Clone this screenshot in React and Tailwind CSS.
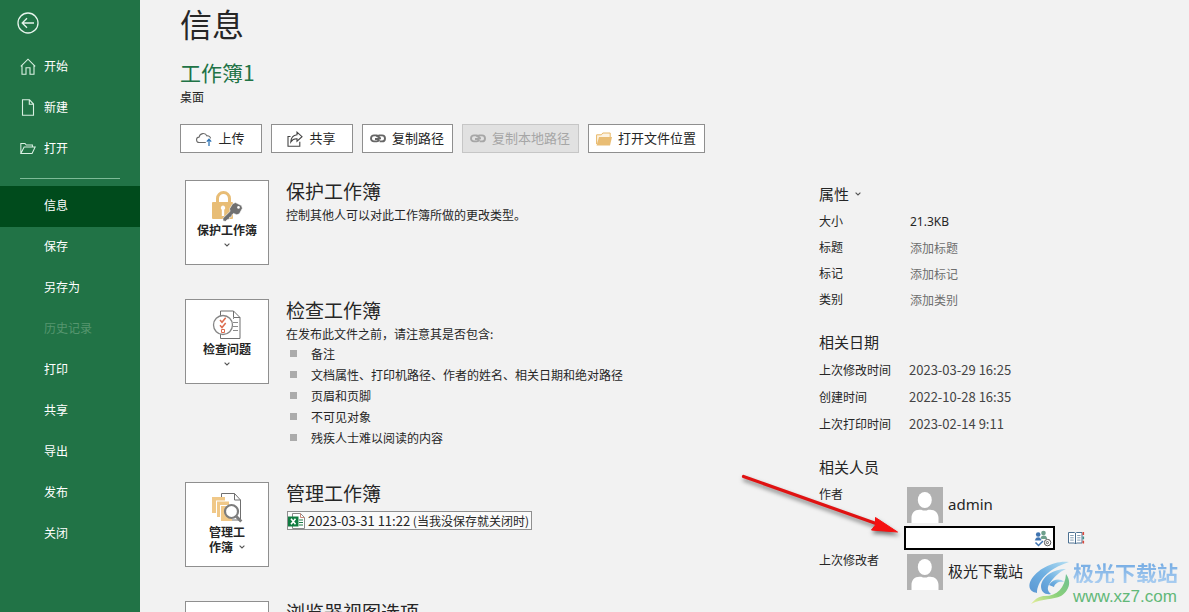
import { useState } from "react";

const buttonLabels = {
  upload: "上传",
  share: "共享",
  copyPath: "复制路径",
  copyLocalPath: "复制本地路径",
  openLocation: "打开文件位置",
};

const menuItems = [
  { label: "信息", active: true },
  { label: "保存" },
  { label: "另存为" },
  { label: "历史记录", disabled: true },
  { label: "打印" },
  { label: "共享" },
  { label: "导出" },
  { label: "发布" },
  { label: "关闭" },
];

const issues = [
  "备注",
  "文档属性、打印机路径、作者的姓名、相关日期和绝对路径",
  "页眉和页脚",
  "不可见对象",
  "残疾人士难以阅读的内容",
];

const dates = [
  { label: "上次修改时间", value: "2023-03-29 16:25" },
  { label: "创建时间", value: "2022-10-28 16:35" },
  { label: "上次打印时间", value: "2023-02-14 9:11" },
];

const editableFields = [
  { id: "title", label: "标题", placeholder: "添加标题" },
  { id: "tags", label: "标记", placeholder: "添加标记" },
  { id: "category", label: "类别", placeholder: "添加类别" },
];

function BackIcon() {
  return (
    <svg width="22" height="22" viewBox="0 0 22 22" fill="none" stroke="#e6f4ec" strokeWidth="1.3">
      <circle cx="11" cy="11" r="10" />
      <path d="M17 11H5.5M10 6.2L5.2 11l4.8 4.8" />
    </svg>
  );
}

function HomeIcon() {
  return (
    <svg width="16" height="17" viewBox="0 0 16 17" fill="none" stroke="#d9f0e2" strokeWidth="1.1">
      <path d="M0.8 8.3L8 1.2l7.2 7.1M2 7.4v8.8h4V9.8h4v6.4h4V7.4" />
    </svg>
  );
}

function NewIcon() {
  return (
    <svg width="16" height="17" viewBox="0 0 16 17" fill="none" stroke="#d9f0e2" strokeWidth="1.1">
      <path d="M2.5 0.8h7l4 4.2v11.2h-11zM9.3 0.8v4.4h4.2" />
    </svg>
  );
}

function OpenIcon() {
  return (
    <svg width="17" height="13" viewBox="0 0 17 13" fill="none" stroke="#d9f0e2" strokeWidth="1.1">
      <path d="M0.9 11.8V1.2h4.4l1.3 1.6h6.6v2M0.9 11.8L4.4 4.8h11.7l-3.3 7z" />
    </svg>
  );
}

function UploadIcon() {
  return (
    <svg width="16" height="14" viewBox="0 0 16 14" fill="none">
      <path
        d="M9.8 10.5H3.4a2.7 2.7 0 0 1-.3-5.4A4.2 4.2 0 0 1 11 3.9a3 3 0 0 1 3.6 2.4"
        stroke="#6b6b6b"
        strokeWidth="1.1"
      />
      <path d="M13 14V7.6M10.8 9.6L13 7.3l2.2 2.3" stroke="#2f74b5" strokeWidth="1.3" />
    </svg>
  );
}

function ShareIcon() {
  return (
    <svg width="16" height="16" viewBox="0 0 16 16" fill="none" stroke="#444" strokeWidth="1.1">
      <path d="M3.5 5.5H1v9.8h11.8v-4.5" />
      <path d="M10 1.2l5 4.5-5 4.5V7.8C7 7.6 5.2 8.8 3.8 11c.2-4 2.4-6.9 6.2-7.3z" />
    </svg>
  );
}

function LinkIcon({ color }) {
  return (
    <svg width="16" height="9" viewBox="0 0 16 9" fill="none" stroke={color} strokeWidth="1.9">
      <path d="M9.2 5.8A3 3 0 0 1 6.8 7.4H4a3 3 0 0 1 0-6h2.4a3 3 0 0 1 2.8 2.2c.2.9-.2 1.4-1 1.4H5" />
      <path d="M6.8 3.2A3 3 0 0 1 9.2 1.4H12a3 3 0 0 1 0 6H9.6" />
      <path d="M7.8 4.3H11" />
    </svg>
  );
}

function FolderIcon() {
  return (
    <svg width="16" height="14" viewBox="0 0 16 14">
      <path d="M.6 12V2.8h4.8L6.8 1h7.4v4" fill="#fdf3e2" stroke="#e8b868" />
      <path d="M3 5h13l-2 8.5H.5z" fill="#e9bd74" />
    </svg>
  );
}

function Chevron() {
  return (
    <svg width="6" height="4" viewBox="0 0 6 4" fill="none" stroke="#555" strokeWidth="1.1">
      <path d="M0.6 0.6L3 3l2.4-2.4" />
    </svg>
  );
}

function LockIcon() {
  return (
    <svg width="32" height="32" viewBox="0 0 32 32">
      <path d="M6.5 14V8.5a6 6 0 0 1 12 0V14" fill="none" stroke="#e8bd76" strokeWidth="3" />
      <rect x="1" y="12" width="21" height="17" rx="1" fill="#e8bd76" />
      <path d="M12 15.5a2.3 2.3 0 0 1 1.2 4.2V26h-2.4v-6.3A2.3 2.3 0 0 1 12 15.5z" fill="#fff" />
      <path
        d="M24.5 12.6l6 3 .9 2.6-3 5.6-2.6 1-3.4-1.4-1.4 1.4-.4 2-2 .4-.5 2-2 .6-1.6 1.5-2.4-.4-.2-2.6 7.2-7-.6-2.4 3.2-5.2z"
        fill="#707070"
        stroke="#fff"
        strokeWidth="0.6"
      />
      <circle cx="27.5" cy="17.4" r="1.3" fill="#fff" />
    </svg>
  );
}

function CheckDocIcon() {
  return (
    <svg width="30" height="30" viewBox="0 0 30 30" fill="none">
      <path d="M8.5 1h13L28 7.5V28.5H8.5z" fill="#fff" stroke="#6f6f6f" />
      <path d="M21.5 1v6.5H28" stroke="#6f6f6f" />
      <path d="M21 12.5h5M21 16.5h5M21 20.5h5M21 8.5h1" stroke="#8b8b8b" />
      <circle cx="11" cy="15" r="9.5" fill="#fff" stroke="#858585" strokeWidth="1.3" />
      <path d="M8 10l2 2.3 3.7-4.5M8 15.2l2 2.3 3.7-4.5" stroke="#dc6b4e" strokeWidth="1.5" />
      <path d="M9.5 19.5h3v3h-3z" stroke="#dc6b4e" />
    </svg>
  );
}

function ManageIcon() {
  return (
    <svg width="32" height="32" viewBox="0 0 32 32" fill="none">
      <path d="M10.5 8V1.5h13L29.5 8v20H17" fill="#fff" stroke="#6f6f6f" />
      <path d="M23.5 1.5V8h6" stroke="#6f6f6f" />
      <path d="M1 5h13v3.5H5V21H1z" fill="#f0c888" />
      <path d="M6 9.5h12V13H9v12H6z" fill="#f0c888" />
      <path d="M10 14h11v15H10z" fill="#f0c888" />
      <circle cx="20.5" cy="19.5" r="6.5" fill="#fff" stroke="#7d7d7d" strokeWidth="2.2" />
      <path d="M25.3 24.5l5 5" stroke="#7d7d7d" strokeWidth="3" />
    </svg>
  );
}

function ExcelIcon() {
  return (
    <svg width="17" height="16" viewBox="0 0 17 16">
      <path d="M4.5.5h8l4 4v11h-12z" fill="#fff" stroke="#8a8a8a" />
      <path d="M12.5.5v4h4" fill="none" stroke="#c98c7c" />
      <path d="M11 7h4M11 9.5h4M11 12h4" stroke="#1f7a47" strokeWidth="1.2" />
      <path d="M0 3.5h10.5v10H0z" fill="#107c41" />
      <path d="M3 5.8l4.5 5.4M7.5 5.8L3 11.2" stroke="#fff" strokeWidth="1.6" />
    </svg>
  );
}

function Avatar() {
  return (
    <svg className="shrink-0" width="36" height="36" viewBox="0 0 36 36">
      <path d="M0 0h36v36H0z" fill="#b1b1b1" />
      <ellipse cx="17.8" cy="13" rx="7" ry="8" fill="#fff" />
      <path d="M4.5 36V31c0-5 3-8.3 8-8.3h1.8c2.2 1.2 4.8 1.2 7 0h1.8c5 0 8.4 3.3 8.4 8.3v5z" fill="#fff" />
    </svg>
  );
}

function CheckNamesIcon() {
  return (
    <svg width="18" height="17" viewBox="0 0 18 17" fill="none">
      <circle cx="9.5" cy="3" r="2.3" fill="#6d9f8b" />
      <path d="M6.5 9c0-4.6 6.6-4.6 6.6 0z" fill="#6d9f8b" />
      <circle cx="4.2" cy="4.6" r="2.3" fill="#3e73b0" />
      <path d="M.8 10.8c0-5 6.8-5 6.8 0z" fill="#3e73b0" stroke="#fff" strokeWidth="0.5" />
      <path d="M1.5 12.5l3 3L9 11" stroke="#3e73b0" strokeWidth="1.5" />
      <circle cx="13.6" cy="12.6" r="3.2" fill="#fff" stroke="#555" />
      <circle cx="13.4" cy="12.6" r="1.1" stroke="#555" strokeWidth="0.9" />
    </svg>
  );
}

function AddressBookIcon() {
  return (
    <svg width="17" height="14" viewBox="0 0 17 14" fill="none">
      <path d="M.5 1.5h6l1 .8 1-.8h5.5v10.5H8.5l-1 1-1-1h-6z" fill="#fff" stroke="#4c7192" />
      <path d="M7.5 2v11" stroke="#4c7192" />
      <path d="M2.2 4.5h3.5M2.2 6.8h3.5M2.2 9.1h3.5M9.2 4.5h3.3M9.2 6.8h3.3M9.2 9.1h3.3" stroke="#86a0b6" />
      <path d="M15.3 1v3" stroke="#d9473a" strokeWidth="1.6" />
      <path d="M15.3 5.5v2.8" stroke="#3f8f8a" strokeWidth="1.6" />
      <path d="M15.3 9.7v2.8" stroke="#d9473a" strokeWidth="1.6" />
    </svg>
  );
}

function Arrow() {
  return (
    <svg
      className="pointer-events-none absolute -left-[79px] top-[294px] drop-shadow-[1px_3px_2px_rgba(0,0,0,0.5)]"
      width="160"
      height="64"
      viewBox="0 0 160 64"
    >
      <path d="M3.5 2.5L136 49.5" stroke="#e01212" strokeWidth="3.2" strokeLinecap="round" />
      <path d="M135.5 43.5L157.5 58l-26-2 4-5z" fill="#f51010" stroke="#f51010" />
    </svg>
  );
}

function Watermark() {
  return (
    <div className="pointer-events-none absolute left-[210px] top-[381px] flex items-start gap-0.5 whitespace-nowrap">
      <svg width="42" height="44" viewBox="0 0 42 44">
        <defs>
          <linearGradient id="swirlBlue" x1="0" y1="1" x2="1" y2="0">
            <stop offset="0" stopColor="#5a97d2" />
            <stop offset="0.5" stopColor="#6fb0e2" />
            <stop offset="1" stopColor="#b5dff2" />
          </linearGradient>
          <linearGradient id="swirlGreen" x1="0" y1="1" x2="1" y2="0">
            <stop offset="0" stopColor="#e6ef9c" />
            <stop offset="0.5" stopColor="#8ad07a" />
            <stop offset="1" stopColor="#6cc095" />
          </linearGradient>
        </defs>
        <path d="M40 1C26-1 8 8 2 19c-4 8 0 12 6 13C8 21 18 8 40 1z" fill="url(#swirlBlue)" />
        <path d="M37 8C25 8 13 15 12 25c0 6 4 9 10 8-4-3-4-7-1-11 4-6 9-11 16-14z" fill="url(#swirlBlue)" />
        <path d="M20 24c4-6 11-7 15-3-5-1-9 1-10 5z" fill="url(#swirlBlue)" />
        <path d="M37 13c6 8 3 17-5 22-8 4-18 2-30 8 5-6 9-8 14-8 12 0 20-8 21-22z" fill="url(#swirlGreen)" />
      </svg>
      <div>
        <div className="bg-linear-to-b from-[#6fa8e2] to-[#a9cdf0] bg-clip-text text-[21px] leading-[22px] font-bold text-transparent">
          极光下载站
        </div>
        <div className="mt-1 font-['Liberation_Sans',sans-serif] text-[17px] leading-5 text-[#62b878]">
          www.xz7.com
        </div>
      </div>
    </div>
  );
}

function ActionButton({ icon, label, disabled }) {
  return (
    <button
      type="button"
      disabled={disabled}
      className="flex h-[29px] min-w-[82px] items-center justify-center gap-1.5 border border-[#8f8f8f] bg-white pr-2 pl-[7px] text-[13px] whitespace-nowrap disabled:border-[#c6c6c6] disabled:bg-[#e1e1e1] disabled:text-[#a6a6a6]"
    >
      <span className="flex w-4 justify-center">{icon}</span>
      <span className="pb-0.5">{label}</span>
    </button>
  );
}

function Section({ icon, tile, title, children }) {
  return (
    <section className="mb-[34px] flex items-start gap-[17px]">
      <button
        type="button"
        aria-label={title}
        className="flex h-[85px] w-[84px] shrink-0 flex-col items-center border border-[#8f8f8f] bg-white pt-[9px] text-[12px] leading-[15px] font-bold"
      >
        <span className="flex h-8 items-center">{icon}</span>
        {tile}
      </button>
      <div>
        <h2 className="mb-1 text-[19px] leading-[21px]">{title}</h2>
        {children}
      </div>
    </section>
  );
}

function Sidebar() {
  const topItems = [
    { label: "开始", icon: <HomeIcon /> },
    { label: "新建", icon: <NewIcon /> },
    { label: "打开", icon: <OpenIcon /> },
  ];

  return (
    <nav className="w-[140px] shrink-0 bg-[#217346] text-[12px] text-white">
      <button type="button" aria-label="返回" className="flex h-[46px] items-center pl-[17px]">
        <BackIcon />
      </button>
      {topItems.map((item) => (
        <button key={item.label} type="button" className="flex h-[41px] w-full items-center gap-2 pl-5">
          <span className="flex w-4 justify-center">{item.icon}</span>
          <span className="pb-0.5">{item.label}</span>
        </button>
      ))}
      <hr className="mx-5 mt-[9px] mb-[7px] border-[#7dbb97]" />
      {menuItems.map((item) => (
        <button
          key={item.label}
          type="button"
          disabled={item.disabled}
          className={`block h-[41px] w-full pb-[3px] pl-11 text-left disabled:text-[#56966f] ${
            item.active ? "bg-[#004b1c]" : ""
          }`}
        >
          {item.label}
        </button>
      ))}
    </nav>
  );
}

function Properties() {
  const [author, setAuthor] = useState("");

  return (
    <aside className="relative w-[370px] shrink-0 text-[12px]">
      <button type="button" className="flex h-7 items-center gap-1.5 text-[15px]">
        属性 <Chevron />
      </button>
      <div className="flex h-[26px] items-center">
        <span className="w-[91px]">大小</span>
        <span className="pt-0.5 font-['Noto_Sans',sans-serif]">21.3KB</span>
      </div>
      {editableFields.map((field) => (
        <div key={field.id} className="flex h-[26px] items-center">
          <label htmlFor={field.id} className="w-[91px]">
            {field.label}
          </label>
          <input
            id={field.id}
            placeholder={field.placeholder}
            className="w-40 bg-transparent pt-0.5 outline-none placeholder:text-[#6e6e6e]"
          />
        </div>
      ))}

      <h3 className="mt-4 text-[15px] leading-7">相关日期</h3>
      <table>
        <tbody>
          {dates.map((date) => (
            <tr key={date.label} className="h-[27px]">
              <th scope="row" className="w-[90px] p-0 text-left font-normal">
                {date.label}
              </th>
              <td className="p-0 text-[13px] text-[#444]">{date.value}</td>
            </tr>
          ))}
        </tbody>
      </table>

      <h3 className="mt-4 text-[15px] leading-7">相关人员</h3>
      <div className="flex">
        <label htmlFor="author" className="w-[85px] leading-[26px]">
          作者
        </label>
        <div className="pt-1.5">
          <div className="ml-[3px] flex items-center gap-[5px] font-['Noto_Sans',sans-serif] text-[15px]">
            <Avatar />
            <span className="pb-0.5">admin</span>
          </div>
          <div className="mt-[3px] flex items-center gap-[13px]">
            <div className="flex h-6 w-[151px] items-center border-2 border-black bg-white pr-px">
              <input
                id="author"
                value={author}
                onChange={(e) => setAuthor(e.target.value)}
                className="min-w-0 flex-1 px-1 outline-none"
              />
              <button type="button" aria-label="检查姓名">
                <CheckNamesIcon />
              </button>
            </div>
            <button type="button" aria-label="通讯簿">
              <AddressBookIcon />
            </button>
          </div>
        </div>
      </div>
      <div className="flex">
        <span className="w-[88px] leading-5">上次修改者</span>
        <div className="mt-1 flex items-center gap-[5px] text-[15px]">
          <Avatar />
          <span className="pb-0.5">极光下载站</span>
        </div>
      </div>

      <Arrow />
      <Watermark />
    </aside>
  );
}

function App() {
  return (
    <div className="flex h-screen overflow-hidden bg-[#f2f2f2] font-['Noto_Sans_CJK_SC',sans-serif] text-[#262626]">
      <Sidebar />
      <main className="min-w-0 flex-1 pl-10">
        <h1 className="text-[32px] leading-[46px]">信息</h1>
        <p className="mt-3 text-[21px] leading-7 text-[#217346]">工作簿1</p>
        <p className="mt-0.5 text-[12px] leading-[18px]">桌面</p>
        <div className="mt-[18px] flex gap-[9px]">
          <ActionButton icon={<UploadIcon />} label={buttonLabels.upload} />
          <ActionButton icon={<ShareIcon />} label={buttonLabels.share} />
          <ActionButton icon={<LinkIcon color="#666" />} label={buttonLabels.copyPath} />
          <ActionButton icon={<LinkIcon color="#a6a6a6" />} label={buttonLabels.copyLocalPath} disabled />
          <ActionButton icon={<FolderIcon />} label={buttonLabels.openLocation} />
        </div>

        <div className="mt-[27px] flex">
          <div className="min-w-0 flex-1 pl-[5px] text-[12px]">
            <Section
              icon={<LockIcon />}
              title="保护工作簿"
              tile={
                <>
                  保护工作簿
                  <span className="mt-1.5">
                    <Chevron />
                  </span>
                </>
              }
            >
              <p className="leading-[19px]">控制其他人可以对此工作簿所做的更改类型。</p>
            </Section>

            <Section
              icon={<CheckDocIcon />}
              title="检查工作簿"
              tile={
                <>
                  检查问题
                  <span className="mt-1.5">
                    <Chevron />
                  </span>
                </>
              }
            >
              <p className="leading-[19px]">在发布此文件之前，请注意其是否包含:</p>
              <ul>
                {issues.map((issue) => (
                  <li key={issue} className="flex h-[21px] items-center gap-3.5 pl-1">
                    <span className="size-[7px] bg-[#ababab]" />
                    {issue}
                  </li>
                ))}
              </ul>
            </Section>

            <Section
              icon={<ManageIcon />}
              title="管理工作簿"
              tile={
                <>
                  管理工
                  <span className="flex items-center gap-1.5">
                    作簿 <Chevron />
                  </span>
                </>
              }
            >
              <button
                type="button"
                className="mt-2 ml-px flex h-[19px] items-center gap-[3px] border border-[#8f8f8f] bg-[#fafafa] pr-0.5 whitespace-nowrap"
              >
                <ExcelIcon />
                <span>
                  <span className="text-[13px]">2023-03-31 11:22</span> (当我没保存就关闭时)
                </span>
              </button>
            </Section>

            <Section title="浏览器视图选项" />
          </div>

          <Properties />
        </div>
      </main>
    </div>
  );
}

export default App;
